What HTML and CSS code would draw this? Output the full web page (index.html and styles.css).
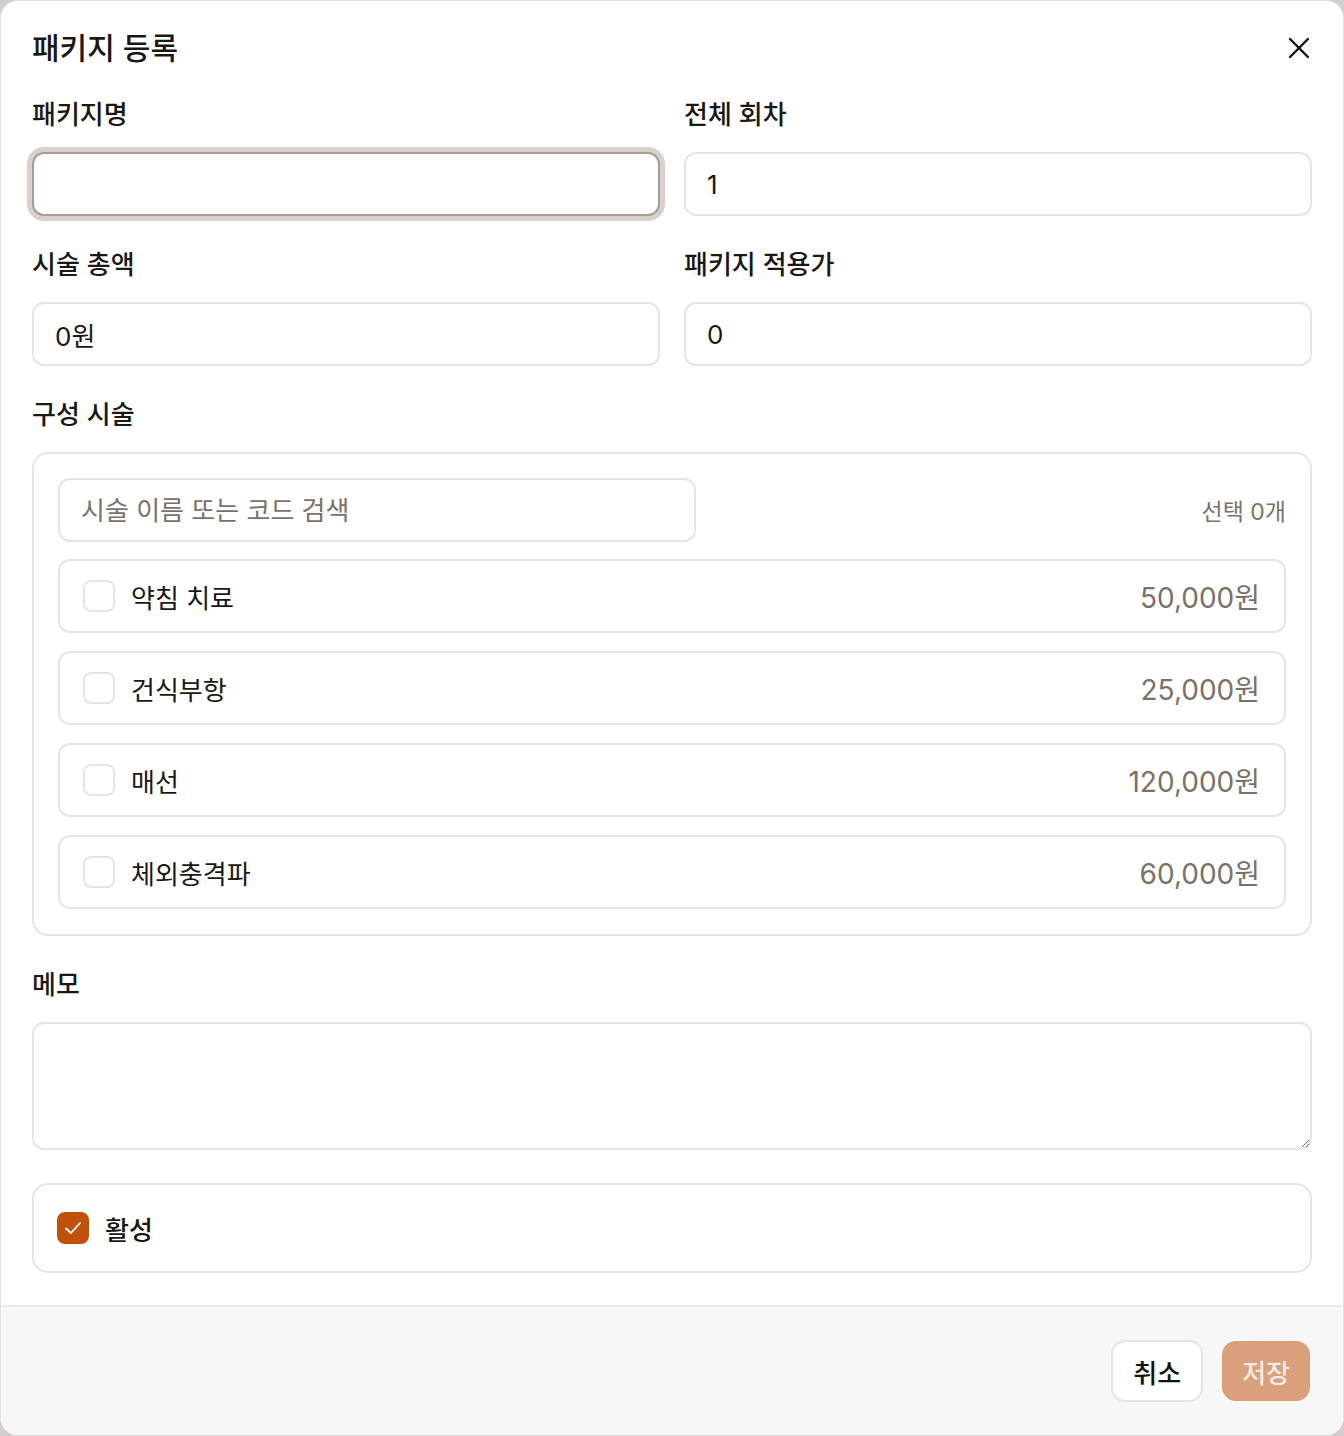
FILE: index.html
```html
<!DOCTYPE html>
<html lang="ko">
<head>
    <meta charset="UTF-8">
    <meta name="viewport" content="width=device-width, initial-scale=1.0">
    <title>패키지 등록</title>
    <link rel="stylesheet" href="styles.css">
</head>
<body>
    <div class="dialog">
        <div class="dialog-body">
            <div class="dialog-header">
                <h2>패키지 등록</h2>
                <button class="close-btn" aria-label="닫기">
                    <svg width="22" height="22" viewBox="0 0 22 22" fill="none" stroke="currentColor" stroke-width="2.4" stroke-linecap="round">
                        <path d="M2 2L20 20M20 2L2 20"/>
                    </svg>
                </button>
            </div>

            <div class="field-row">
                <div class="field">
                    <label class="field-label">패키지명</label>
                    <input class="text-input is-focused" type="text">
                </div>
                <div class="field">
                    <label class="field-label">전체 회차</label>
                    <input class="text-input" type="text" value="1">
                </div>
            </div>

            <div class="field-row">
                <div class="field">
                    <label class="field-label">시술 총액</label>
                    <input class="text-input" type="text" value="0원" readonly>
                </div>
                <div class="field">
                    <label class="field-label">패키지 적용가</label>
                    <input class="text-input" type="text" value="0">
                </div>
            </div>

            <div class="field">
                <label class="field-label">구성 시술</label>
                <div class="treatment-box">
                    <div class="treatment-search">
                        <input class="text-input search-input" type="text" placeholder="시술 이름 또는 코드 검색">
                        <span class="selected-count">선택 0개</span>
                    </div>
                    <ul class="treatment-list">
                        <li class="treatment-item">
                            <span class="checkbox"></span>
                            <span class="treatment-name">약침 치료</span>
                            <span class="treatment-price">50,000원</span>
                        </li>
                        <li class="treatment-item">
                            <span class="checkbox"></span>
                            <span class="treatment-name">건식부항</span>
                            <span class="treatment-price">25,000원</span>
                        </li>
                        <li class="treatment-item">
                            <span class="checkbox"></span>
                            <span class="treatment-name">매선</span>
                            <span class="treatment-price">120,000원</span>
                        </li>
                        <li class="treatment-item">
                            <span class="checkbox"></span>
                            <span class="treatment-name">체외충격파</span>
                            <span class="treatment-price">60,000원</span>
                        </li>
                    </ul>
                </div>
            </div>

            <div class="field">
                <label class="field-label">메모</label>
                <textarea class="memo-input"></textarea>
            </div>

            <div class="active-box">
                <span class="checkbox is-checked">
                    <svg width="22" height="22" viewBox="0 0 22 22" fill="none" stroke="#fff" stroke-width="1.8" stroke-linecap="round" stroke-linejoin="round">
                        <path d="M4 11.5L9 16L18 6"/>
                    </svg>
                </span>
                <span class="active-label">활성</span>
            </div>
        </div>

        <div class="dialog-footer">
            <button class="btn btn-cancel">취소</button>
            <button class="btn btn-save" disabled>저장</button>
        </div>
    </div>
</body>
</html>
```

FILE: styles.css
```css
/* Base */
* {
    margin: 0;
    padding: 0;
    box-sizing: border-box;
}

body {
    background: #d3cecc;
    font-family: Inter, "Noto Sans CJK KR", sans-serif;
    color: #1b1715;
}

/* Dialog */
.dialog {
    width: 1344px;
    height: 1436px;
    background: #fff;
    border: 1px solid #e3dfdd;
    border-radius: 18px;
    overflow: hidden;
    display: flex;
    flex-direction: column;
}

.dialog-body {
    flex: 1;
    padding: 29px 31px 32px;
    display: flex;
    flex-direction: column;
    gap: 33px;
}

.dialog-header {
    display: flex;
    align-items: center;
    justify-content: space-between;
    height: 36px;
}

.dialog-header h2 {
    font-size: 30px;
    font-weight: 500;
    line-height: 36px;
}

.close-btn {
    background: none;
    border: none;
    color: #111;
    width: 24px;
    height: 24px;
    display: flex;
    align-items: center;
    justify-content: center;
    margin-right: 1px;
    cursor: pointer;
}

/* Fields */
.field-row {
    display: grid;
    grid-template-columns: 1fr 1fr;
    gap: 24px;
}

.field {
    display: flex;
    flex-direction: column;
}

.field-label {
    font-size: 26px;
    font-weight: 500;
    line-height: 32px;
    margin-bottom: 21px;
}

.text-input {
    height: 64px;
    width: 100%;
    border: 2px solid #e8e4e3;
    border-radius: 12px;
    padding: 0 20px 0 21px;
    font-family: inherit;
    font-size: 26px;
    color: #1b1715;
    background: #fff;
    outline: none;
}

.text-input::placeholder {
    color: #7c706b;
}

.text-input.is-focused {
    border-color: #a69d99;
    box-shadow: 0 0 0 5px #d7d1ce;
}

/* Treatment box */
.treatment-box {
    border: 2px solid #e8e4e3;
    border-radius: 16px;
    padding: 24px 24px 25px;
    display: flex;
    flex-direction: column;
    gap: 17px;
}

.treatment-search {
    display: flex;
    align-items: center;
    justify-content: space-between;
}

.search-input {
    width: 638px;
}

.selected-count {
    font-size: 23px;
    color: #7c706b;
}

.treatment-list {
    list-style: none;
    display: flex;
    flex-direction: column;
    gap: 18px;
}

.treatment-item {
    height: 74px;
    border: 2px solid #e8e4e3;
    border-radius: 12px;
    padding: 0 24px 0 23px;
    display: flex;
    align-items: center;
    gap: 16px;
}

.checkbox {
    width: 32px;
    height: 32px;
    border: 2px solid #e8e4e3;
    border-radius: 8px;
    flex-shrink: 0;
    display: flex;
    align-items: center;
    justify-content: center;
}

.checkbox.is-checked {
    background: #bf510b;
    border-color: #bf510b;
}

.treatment-name {
    font-size: 26px;
    flex: 1;
}

.treatment-price {
    font-size: 28px;
    color: #7c706b;
}

/* Memo */
.memo-input {
    height: 128px;
    width: 100%;
    border: 2px solid #e8e4e3;
    border-radius: 12px;
    padding: 16px 20px;
    font-family: inherit;
    font-size: 26px;
    resize: vertical;
    outline: none;
}

/* Active toggle */
.active-box {
    height: 90px;
    border: 2px solid #e8e4e3;
    border-radius: 16px;
    padding: 0 23px;
    display: flex;
    align-items: center;
    gap: 16px;
}

.active-label {
    font-size: 26px;
    font-weight: 500;
}

/* Footer */
.dialog-footer {
    height: 131px;
    background: #f7f7f7;
    border-top: 2px solid #ebe8e7;
    padding: 0 33px 0 0;
    display: flex;
    align-items: center;
    justify-content: flex-end;
    gap: 19px;
}

.btn {
    height: 62px;
    padding: 0 20px;
    border-radius: 14px;
    font-family: inherit;
    font-size: 26px;
    font-weight: 500;
    cursor: pointer;
}

.btn-cancel {
    background: #fff;
    border: 2px solid #e8e4e3;
    color: #111;
}

.btn-save {
    background: #d9a07b;
    border: none;
    color: #f7ece4;
    height: 60px;
}
```
